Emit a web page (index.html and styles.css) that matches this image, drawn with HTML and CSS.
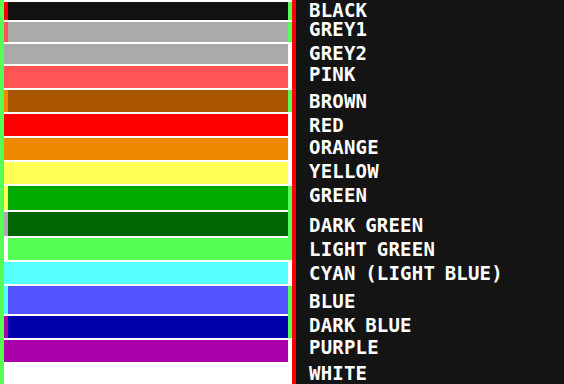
FILE: index.html
```html
<!DOCTYPE html>
<html>
<head>
<meta charset="utf-8">
<link rel="stylesheet" href="styles.css">
</head>
<body>
<div class="screen">
  <div class="swatches">
    <div class="row"><span class="lead c-red"></span><span class="bar c-black"></span><span class="cap c-lgreen"></span></div>
    <div class="row"><span class="lead c-pink"></span><span class="bar c-grey"></span><span class="cap c-lgreen"></span></div>
    <div class="row"><span class="lead c-grey"></span><span class="bar c-grey"></span><span class="cap"></span></div>
    <div class="row"><span class="lead c-pink"></span><span class="bar c-pink"></span><span class="cap"></span></div>
    <div class="row"><span class="lead c-orange"></span><span class="bar c-brown"></span><span class="cap c-lgreen"></span></div>
    <div class="row"><span class="lead c-red"></span><span class="bar c-red"></span><span class="cap"></span></div>
    <div class="row"><span class="lead c-orange"></span><span class="bar c-orange"></span><span class="cap"></span></div>
    <div class="row"><span class="lead c-yellow"></span><span class="bar c-yellow"></span><span class="cap"></span></div>
    <div class="row"><span class="lead c-yellow"></span><span class="bar c-green"></span><span class="cap c-lgreen ext"></span></div>
    <div class="row"><span class="lead c-grey"></span><span class="bar c-dgreen"></span><span class="cap c-lgreen ext"></span></div>
    <div class="row"><span class="lead"></span><span class="bar c-lgreen"></span><span class="cap c-lgreen"></span></div>
    <div class="row"><span class="lead c-cyan"></span><span class="bar c-cyan"></span><span class="cap"></span></div>
    <div class="row"><span class="lead c-cyan"></span><span class="bar c-blue"></span><span class="cap c-lgreen ext"></span></div>
    <div class="row"><span class="lead c-purple"></span><span class="bar c-dblue"></span><span class="cap c-lgreen"></span></div>
    <div class="row"><span class="lead c-purple"></span><span class="bar c-purple"></span><span class="cap"></span></div>
    <div class="row"><span class="lead"></span><span class="bar"></span><span class="cap"></span></div>
  </div>
  <ul class="labels">
    <li>BLACK</li>
    <li>GREY1</li>
    <li>GREY2</li>
    <li>PINK</li>
    <li>BROWN</li>
    <li>RED</li>
    <li>ORANGE</li>
    <li>YELLOW</li>
    <li>GREEN</li>
    <li>DARK GREEN</li>
    <li>LIGHT GREEN</li>
    <li>CYAN (LIGHT BLUE)</li>
    <li>BLUE</li>
    <li>DARK BLUE</li>
    <li>PURPLE</li>
    <li>WHITE</li>
  </ul>
</div>
</body>
</html>
```

FILE: styles.css
```css
html, body {
  margin: 0;
  padding: 0;
  background: #141414;
  overflow: hidden;
}

.screen {
  display: flex;
  width: 564px;
  height: 384px;
  overflow: hidden;
}

.swatches {
  width: 288px;
  flex: none;
  background: #ffffff;
  border-left: 4px solid #55ff55;
  border-right: 4px solid #ff0000;
  display: grid;
  grid-template-rows: 18px 20px 20px 22px 22px 22px 22px 22px 24px 24px 22px 22px 28px 22px 22px 22px;
  row-gap: 2px;
  padding-top: 2px;
  align-content: start;
}

.row {
  display: flex;
}

.lead {
  width: 4px;
  flex: none;
}

.bar {
  flex: 1;
}

.cap {
  width: 4px;
  flex: none;
}

.cap.ext {
  margin-bottom: -2px;
}

.c-black { background: #111111; }
.c-grey { background: #aaaaaa; }
.c-pink { background: #ff5555; }
.c-brown { background: #aa5500; }
.c-red { background: #ff0000; }
.c-orange { background: #ee8800; }
.c-yellow { background: #ffff55; }
.c-green { background: #00aa00; }
.c-dgreen { background: #006600; }
.c-lgreen { background: #55ff55; }
.c-cyan { background: #55ffff; }
.c-blue { background: #5555ff; }
.c-dblue { background: #0000aa; }
.c-purple { background: #aa00aa; }

.labels {
  list-style: none;
  margin: 0;
  padding: 0 0 0 13px;
  display: grid;
  grid-template-rows: 19px 24px 21px 27px 24px 22px 24px 24px 30px 24px 24px 28px 24px 22px 26px 19px;
  align-content: start;
  padding-top: 0;
  color: #ffffff;
  font-family: "DejaVu Sans Mono", monospace;
  font-weight: bold;
  font-size: 19px;
  line-height: 19px;
  letter-spacing: 0.2px;
  word-spacing: -2px;
  white-space: nowrap;
}

.labels li {
  padding-top: 1px;
}
```
